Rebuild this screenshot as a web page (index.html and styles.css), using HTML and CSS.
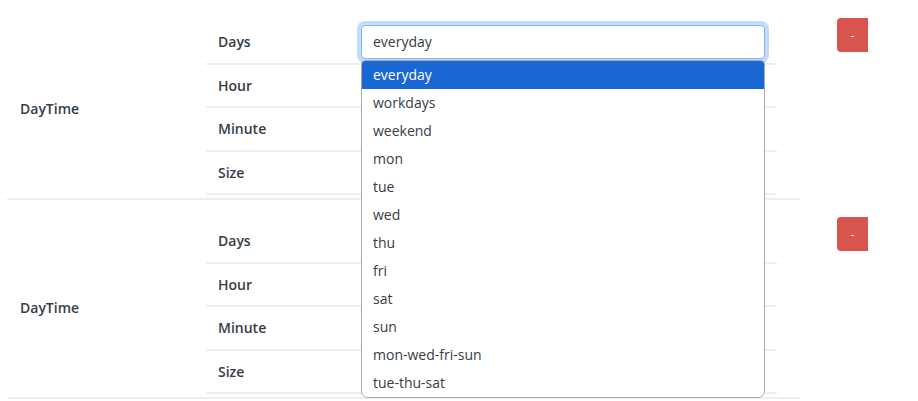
FILE: index.html
```html
<!DOCTYPE html>
<html>
<head>
<meta charset="utf-8">
<link rel="stylesheet" href="styles.css">
</head>
<body>
<div class="page">
  <div class="group">
    <div class="grid">
      <div class="label">DayTime</div>
      <div class="inner">
        <div class="row">
          <div class="key">Days</div>
          <div class="val">
            <div class="select-wrap">
              <div class="input focus">everyday</div>
              <ul class="dropdown">
                <li class="sel">everyday</li>
                <li>workdays</li>
                <li>weekend</li>
                <li>mon</li>
                <li>tue</li>
                <li>wed</li>
                <li>thu</li>
                <li>fri</li>
                <li>sat</li>
                <li>sun</li>
                <li>mon-wed-fri-sun</li>
                <li>tue-thu-sat</li>
              </ul>
            </div>
          </div>
        </div>
        <div class="row"><div class="key">Hour</div><div class="val"></div></div>
        <div class="row"><div class="key">Minute</div><div class="val"></div></div>
        <div class="row"><div class="key">Size</div><div class="val"></div></div>
      </div>
    </div>
    <button class="remove">-</button>
  </div>
  <div class="group">
    <div class="grid">
      <div class="label">DayTime</div>
      <div class="inner">
        <div class="row"><div class="key">Days</div><div class="val"></div></div>
        <div class="row"><div class="key">Hour</div><div class="val"></div></div>
        <div class="row"><div class="key">Minute</div><div class="val"></div></div>
        <div class="row"><div class="key">Size</div><div class="val"></div></div>
      </div>
    </div>
    <button class="remove">-</button>
  </div>
</div>
</body>
</html>
```
FILE: styles.css
```css
html, body {
  margin: 0;
  padding: 0;
  background: #fff;
}
body {
  font-family: "Open Sans", "Noto Sans", sans-serif;
  font-size: 14px;
  color: #373d46;
}
.page {
  display: flex;
  flex-direction: column;
  padding-top: 1px;
}
.group {
  display: flex;
  align-items: flex-start;
}
.grid {
  margin-left: 7px;
  width: 793px;
  display: flex;
  align-items: center;
  border-bottom: 2px solid #edf0f3;
  padding-top: 20px;
  padding-bottom: 3px;
}
.label {
  width: 186px;
  padding-left: 13px;
  font-weight: 600;
}
.inner {
  width: 571px;
  display: flex;
  flex-direction: column;
}
.row {
  display: flex;
  align-items: center;
  height: 41.5px;
  border-bottom: 2px solid #edf0f3;
}
.key {
  width: 131px;
  padding-left: 12px;
  font-weight: 600;
}
.val {
  width: 404px;
  padding: 0 12px;
}
.select-wrap {
  position: relative;
}
.input {
  box-sizing: border-box;
  height: 34px;
  border: 1px solid #86b7fe;
  border-radius: 4px;
  padding: 0 11px;
  display: flex;
  align-items: center;
  background: #fff;
}
.input.focus {
  box-shadow: 0 0 0 4px rgba(13, 110, 253, 0.25);
}
.dropdown {
  position: absolute;
  left: 0;
  right: 0;
  top: 35px;
  margin: 0;
  padding: 0;
  list-style: none;
  background: #fff;
  border: 1px solid #a9a9a9;
  border-radius: 4px 4px 7px 7px;
  overflow: hidden;
  z-index: 5;
}
.dropdown li {
  height: 28px;
  line-height: 28px;
  padding-left: 11px;
  color: #373d46;
}
.dropdown li.sel {
  background: #1967d2;
  color: #fff;
}
.remove {
  margin-left: 37px;
  margin-top: 17px;
  width: 31px;
  height: 34px;
  border: none;
  border-radius: 4px 0 0 4px;
  background: #d9534f;
  color: #fff;
  font-family: "Open Sans", sans-serif;
  font-size: 12px;
  padding: 0;
}
```
